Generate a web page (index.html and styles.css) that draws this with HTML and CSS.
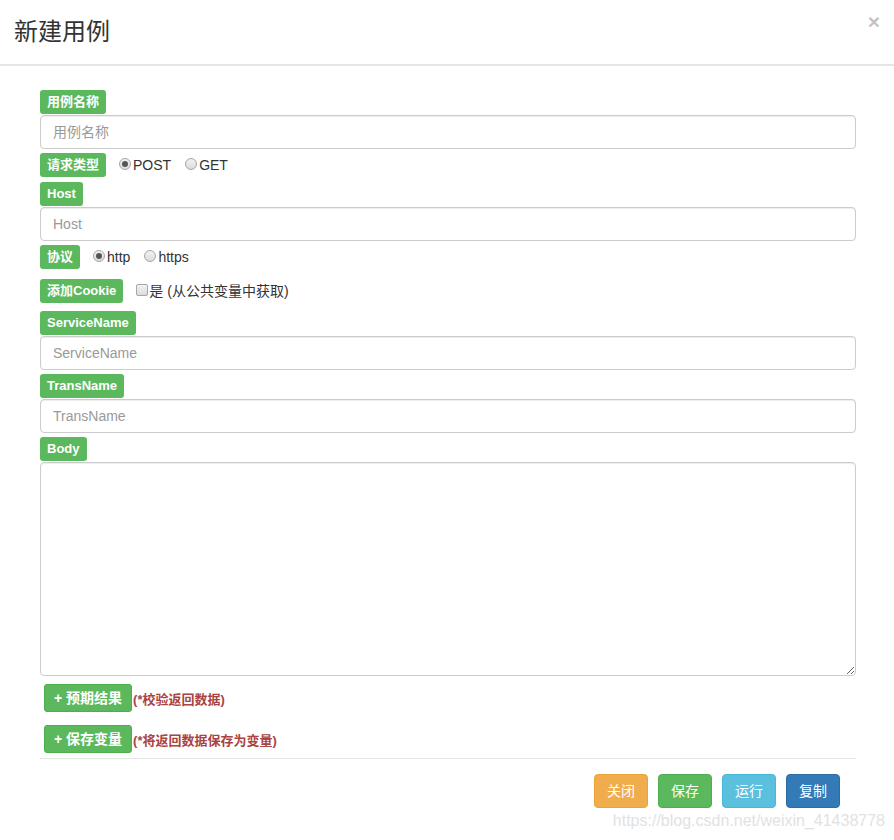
FILE: index.html
```html
<!DOCTYPE html>
<html lang="zh">
<head>
<meta charset="utf-8">
<title>新建用例</title>
<link rel="stylesheet" href="styles.css">
</head>
<body>
<div class="modal">
  <div class="modal-header">
    <h4 class="modal-title">新建用例</h4>
    <span class="close">×</span>
  </div>
  <div class="modal-body">
    <div class="field f-name">
      <span class="tag">用例名称</span>
      <input class="form-control" type="text" placeholder="用例名称">
    </div>
    <div class="inline-row r-method">
      <span class="tag">请求类型</span>
      <label class="opt first"><input type="radio" name="m" checked>POST</label>
      <label class="opt"><input type="radio" name="m">GET</label>
    </div>
    <div class="field f-host">
      <span class="tag">Host</span>
      <input class="form-control" type="text" placeholder="Host">
    </div>
    <div class="inline-row r-proto">
      <span class="tag">协议</span>
      <label class="opt first"><input type="radio" name="p" checked>http</label>
      <label class="opt"><input type="radio" name="p">https</label>
    </div>
    <div class="inline-row r-cookie">
      <span class="tag">添加Cookie</span>
      <label class="opt chk"><input type="checkbox">是 (从公共变量中获取)</label>
    </div>
    <div class="field f-service">
      <span class="tag">ServiceName</span>
      <input class="form-control" type="text" placeholder="ServiceName">
    </div>
    <div class="field f-trans">
      <span class="tag">TransName</span>
      <input class="form-control" type="text" placeholder="TransName">
    </div>
    <div class="field f-body">
      <span class="tag">Body</span>
      <textarea class="form-control body-area"></textarea>
    </div>
    <div class="add-row a-expect">
      <button class="btn-add">+ 预期结果</button><span class="hint">(*校验返回数据)</span>
    </div>
    <div class="add-row a-var">
      <button class="btn-add">+ 保存变量</button><span class="hint">(*将返回数据保存为变量)</span>
    </div>
    <div class="modal-footer">
      <button class="btn btn-warning">关闭</button>
      <button class="btn btn-success">保存</button>
      <button class="btn btn-info">运行</button>
      <button class="btn btn-primary">复制</button>
    </div>
  </div>
  <div class="watermark">https://blog.csdn.net/weixin_41438778</div>
</div>
</body>
</html>
```
FILE: styles.css
```css
* { box-sizing: border-box; }
html, body {
  margin: 0;
  padding: 0;
  background: #fff;
}
body {
  font-family: "Liberation Sans", "Noto Sans CJK SC", sans-serif;
  font-size: 14px;
  color: #333;
  width: 894px;
  height: 840px;
  overflow: hidden;
}
.modal {
  position: relative;
  width: 894px;
  height: 840px;
  background: #fff;
}
.modal-header {
  position: relative;
  height: 66px;
  border-bottom: 2px solid #e5e5e5;
  padding: 15px 14px 0;
}
.modal-title {
  margin: 0;
  font-weight: normal;
  font-size: 24px;
  line-height: 34px;
  color: #333;
}
.close {
  position: absolute;
  right: 14px;
  top: 10px;
  font-size: 21px;
  font-weight: bold;
  line-height: 24px;
  color: #c4c4c4;
}
.modal-body {
  padding: 24px 38px 0 40px;
}
.tag {
  display: inline-block;
  height: 24px;
  line-height: 24px;
  padding: 0 7px;
  background: #5cb85c;
  color: #fff;
  font-size: 13px;
  font-weight: bold;
  border-radius: 3px;
  white-space: nowrap;
}
.field .tag { display: block; width: max-content; }
.form-control {
  display: block;
  width: 816px;
  height: 34px;
  padding: 6px 12px;
  font-family: inherit;
  font-size: 14px;
  color: #555;
  background: #fff;
  border: 1px solid #ccc;
  border-radius: 4px;
  box-shadow: inset 0 1px 1px rgba(0,0,0,.075);
  margin: 1px 0 0;
}
.form-control::placeholder { color: #999; }
.body-area {
  height: 214px;
  resize: vertical;
}
.inline-row {
  display: flex;
  align-items: center;
  height: 24px;
}
.opt {
  display: inline-flex;
  align-items: center;
  font-size: 14px;
  color: #333;
  margin-left: 14px;
  line-height: 20px;
}
.opt.first { margin-left: 13px; }
.opt.chk { margin-left: 13px; }
.opt input {
  -webkit-appearance: none;
  appearance: none;
  margin: 0 2px 2px 0;
  width: 12px;
  height: 12px;
  border: 1px solid #a6a6a6;
  background: linear-gradient(#f2f2f2, #dcdcdc);
  position: relative;
}
.opt input[type="radio"] { border-radius: 50%; }
.opt input[type="radio"]:checked::after {
  content: "";
  position: absolute;
  left: 2px;
  top: 2px;
  width: 6px;
  height: 6px;
  border-radius: 50%;
  background: #555;
}
.opt input[type="checkbox"] {
  border-radius: 2px;
  margin-right: 1px;
}

.f-name { margin-top: 0; }
.r-method { margin-top: 4px; }
.f-host { margin-top: 5px; }
.r-proto { margin-top: 4px; }
.r-cookie { margin-top: 10px; }
.f-service { margin-top: 8px; }
.f-trans { margin-top: 4px; }
.f-body { margin-top: 4px; }

.add-row {
  display: flex;
  align-items: center;
  padding-left: 4px;
}
.a-expect { margin-top: 8px; }
.a-var { margin-top: 13px; }
.btn-add {
  height: 28px;
  padding: 0 9px;
  background: #5cb85c;
  border: 1px solid #4cae4c;
  color: #fff;
  font-family: inherit;
  font-size: 14px;
  font-weight: bold;
  border-radius: 3px;
  line-height: 26px;
}
.hint {
  color: #a94442;
  font-size: 13px;
  font-weight: bold;
  margin-left: 1px;
}
.modal-footer {
  margin-top: 5px;
  border-top: 1px solid #e5e5e5;
  width: 816px;
  padding: 15px 16px 0 0;
  display: flex;
  justify-content: flex-end;
  gap: 10px;
}
.btn {
  height: 34px;
  padding: 0 12px;
  font-family: inherit;
  font-size: 14px;
  line-height: 32px;
  color: #fff;
  border: 1px solid transparent;
  border-radius: 4px;
}
.btn-warning { background: #f0ad4e; border-color: #eea236; }
.btn-success { background: #5cb85c; border-color: #4cae4c; }
.btn-info { background: #5bc0de; border-color: #46b8da; }
.btn-primary { background: #337ab7; border-color: #2e6da4; }
.watermark {
  position: absolute;
  right: 9px;
  top: 811px;
  font-size: 16px;
  line-height: 20px;
  color: #e2e2e2;
  white-space: nowrap;
}
```
